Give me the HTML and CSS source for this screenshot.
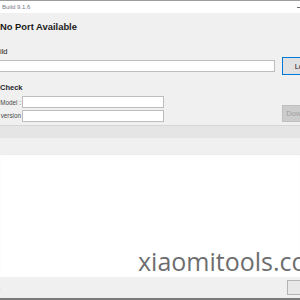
FILE: index.html
```html
<!DOCTYPE html>
<html lang="en">
<head>
    <meta charset="UTF-8">
    <meta name="viewport" content="width=device-width, initial-scale=1.0">
    <title>Build 9.1.6</title>
    <link rel="stylesheet" href="styles.css">
</head>
<body>
    <div class="window">
        <div class="titlebar">
            <span class="title">Build 9.1.6</span>
            <span class="minimize"></span>
        </div>

        <div class="panel">
            <div class="status">No Port Available</div>
            <div class="caption">ild</div>
            <div class="load-row">
                <input class="field field-wide" type="text">
                <button class="btn btn-focus">Load</button>
            </div>

            <div class="check-row">
                <div class="check-fields">
                    <div class="heading">Check</div>
                    <div class="pair">
                        <span class="key">Model :</span>
                        <input class="field field-short" type="text">
                    </div>
                    <div class="pair">
                        <span class="key">version</span>
                        <input class="field field-short" type="text">
                    </div>
                </div>
                <button class="btn" disabled>Download</button>
            </div>
        </div>

        <div class="divider"></div>
        <div class="tabstrip"></div>

        <div class="log">
            <span class="watermark">xiaomitools.com</span>
        </div>

        <div class="statusbar">
            <span class="link">t</span>
            <button class="btn btn-small"></button>
        </div>
    </div>
</body>
</html>
```

FILE: styles.css
```css
html, body {
    margin: 0;
    padding: 0;
}
body {
    width: 300px;
    height: 300px;
    overflow: hidden;
    background: #ffffff;
    font-family: "Liberation Sans", Arial, sans-serif;
}
.window {
    display: flex;
    flex-direction: column;
    width: 300px;
    height: 300px;
    border-top: 1px solid #9c9c9c;
    box-sizing: border-box;
}
.titlebar {
    display: flex;
    align-items: center;
    justify-content: space-between;
    height: 12px;
    background: #ffffff;
    padding-left: 2px;
}
.title {
    font-size: 6px;
    color: #737884;
}
.minimize {
    width: 4px;
    height: 1px;
    background: #6a6a6a;
    margin-right: -1px;
    margin-top: 1px;
}
.panel {
    flex-shrink: 0;
    background: #f0f0f0;
    padding: 8px 0 0 0;
    height: 112px;
    box-sizing: border-box;
}
.status {
    font-size: 9.4px;
    font-weight: bold;
    line-height: 12px;
    color: #1a1a1a;
}
.caption {
    margin-top: 13.5px;
    font-size: 7.5px;
    line-height: 9px;
    color: #222;
}
.load-row {
    display: flex;
    align-items: center;
    margin-top: 1.5px;
    height: 18px;
}
.field {
    flex-shrink: 0;
    box-sizing: border-box;
    height: 12px;
    margin: 0;
    padding: 0;
    background: #ffffff;
    border: 1px solid #bdbdbd;
    outline: none;
}
.field-wide {
    width: 277px;
    margin-left: -2px;
}
.field-short {
    width: 142px;
}
.btn {
    flex-shrink: 0;
    box-sizing: border-box;
    width: 42px;
    height: 17px;
    margin: 0 -24px 0 auto;
    padding: 0;
    font-family: "Liberation Sans", Arial, sans-serif;
    font-size: 7.5px;
    color: #1a1a1a;
    background: #e1e1e1;
    border: 1px solid #adadad;
}
.btn-focus {
    height: 18px;
    border-color: #0078d7;
}
.btn:disabled {
    background: #cccccc;
    border-color: #bfbfbf;
    color: #a0a0a0;
}
.check-row {
    display: flex;
    align-items: flex-end;
    margin-top: 7.5px;
}
.check-fields {
    display: flex;
    flex-direction: column;
    gap: 1.5px;
}
.heading {
    font-size: 7.5px;
    font-weight: bold;
    line-height: 9px;
    color: #1f1f2e;
    margin-bottom: 3px;
}
.pair {
    display: flex;
    align-items: center;
}
.key {
    display: flex;
    justify-content: flex-end;
    width: 21px;
    margin-right: 1px;
    white-space: nowrap;
    font-size: 6.3px;
    color: #4a4a4a;
}
.divider {
    flex-shrink: 0;
    height: 1px;
    background: #d6d6d6;
}
.tabstrip {
    flex-shrink: 0;
    height: 12px;
    background: #e5e5e5;
    border-bottom: 16px solid #f0f0f0;
}
.log {
    flex: 1;
    display: flex;
    align-items: flex-end;
    padding: 0 0 3px 138px;
    background: #ffffff;
    box-shadow: inset 0 1px 1px #ececec;
}
.watermark {
    font-family: "Open Sans", sans-serif;
    font-size: 25px;
    line-height: 25px;
    color: #6e6e6e;
    white-space: nowrap;
}
.statusbar {
    flex-shrink: 0;
    display: flex;
    align-items: center;
    height: 21px;
    background: #f0f0f0;
    border-bottom: 2px solid #7a7a7a;
}
.link {
    margin-left: -2px;
    font-size: 7.5px;
    color: #5b4f8c;
}
.btn-small {
    width: 30px;
    height: 15px;
    margin-right: -17px;
    border-color: #b4b4b4;
    background: #e8e8e8;
}
```
